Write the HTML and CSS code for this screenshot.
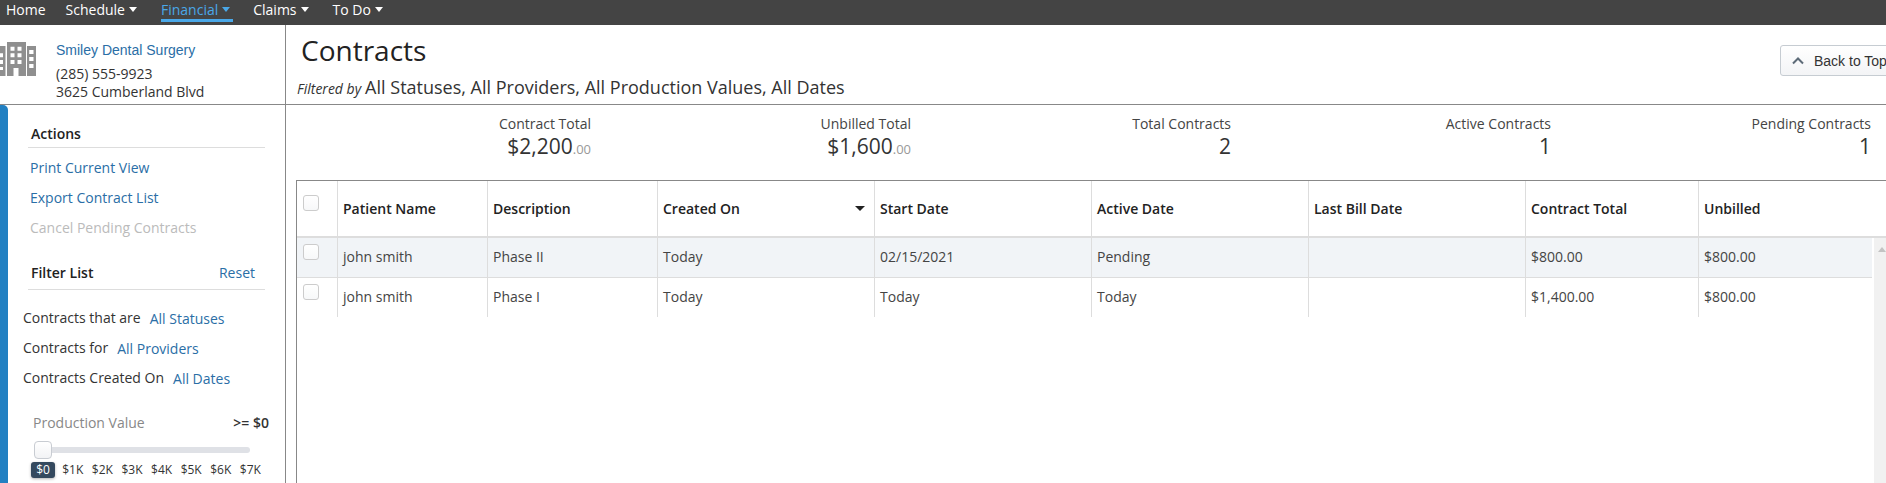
FILE: index.html
```html
<!DOCTYPE html>
<html lang="en">
<head>
<meta charset="utf-8">
<title>Contracts</title>
<link rel="stylesheet" href="styles.css">
</head>
<body>
<nav class="topnav">
  <a class="nav-item nav-home">Home</a>
  <a class="nav-item nav-schedule">Schedule<span class="caret"></span></a>
  <a class="nav-item nav-financial active">Financial<span class="caret"></span></a>
  <a class="nav-item nav-claims">Claims<span class="caret"></span></a>
  <a class="nav-item nav-todo">To Do<span class="caret"></span></a>
</nav>
<header class="head">
  <div class="office">
    <svg class="office-icon" width="37" height="34" viewBox="0 0 37 34">
      <path fill="#8f8f8f" fill-rule="evenodd" d="M7 0h19v34h-7.500v-8h-5v8H7z M10.500 4.700v4h4v-4z M17.500 4.700v4h4v-4z M10.500 11.300v4h4v-4z M17.500 11.300v4h4v-4z M10.500 18v4h4v-4z M17.500 18v4h4v-4z"/>
      <path fill="#8f8f8f" fill-rule="evenodd" d="M0 4h5.500v30H0z M0 11.300v4h3v-4z M0 18v4h3v-4z M0 25v3h3v-3z"/>
      <path fill="#8f8f8f" fill-rule="evenodd" d="M27 4h9v30h-9z M29.200 8v4h4.300V8z M29.200 15v4h4.300v-4z M29.200 22v4h4.300v-4z"/>
    </svg>
    <div class="office-text">
      <a class="office-name">Smiley Dental Surgery</a>
      <div class="office-line phone">(285) 555-9923</div>
      <div class="office-line">3625 Cumberland Blvd</div>
    </div>
  </div>
  <div class="page-head">
    <div class="title-block">
      <h1>Contracts</h1>
      <p class="filtered"><em>Filtered by</em><span>All Statuses, All Providers, All Production Values, All Dates</span></p>
    </div>
    <button class="back-top">
      <svg width="14" height="9" viewBox="0 0 14 9"><path d="M2 7.500 7 2.500l5 5" fill="none" stroke="#5d6b78" stroke-width="2"/></svg>
      <span>Back to Top</span>
    </button>
  </div>
</header>
<div class="content">
  <aside class="side">
    <div class="side-tab"></div>
    <div class="side-body">
      <div class="side-title"><span>Actions</span></div>
      <ul class="actions">
        <li><a>Print Current View</a></li>
        <li><a>Export Contract List</a></li>
        <li><a class="disabled">Cancel Pending Contracts</a></li>
      </ul>
      <div class="side-title filter-title"><span>Filter List</span><a>Reset</a></div>
      <ul class="filters">
        <li>Contracts that are<a>All Statuses</a></li>
        <li>Contracts for<a>All Providers</a></li>
        <li>Contracts Created On<a>All Dates</a></li>
      </ul>
      <div class="prod">
        <div class="prod-head"><span class="prod-label">Production Value</span><b>&gt;= $0</b></div>
        <div class="track"><span class="handle"></span></div>
        <div class="ticks">
          <span class="tick current">$0</span><span class="tick">$1K</span><span class="tick">$2K</span><span class="tick">$3K</span><span class="tick">$4K</span><span class="tick">$5K</span><span class="tick">$6K</span><span class="tick">$7K</span>
        </div>
      </div>
    </div>
  </aside>
  <main class="main">
    <section class="stats">
      <div class="stat"><div class="stat-label">Contract Total</div><div class="stat-value">$2,200<small>.00</small></div></div>
      <div class="stat"><div class="stat-label">Unbilled Total</div><div class="stat-value">$1,600<small>.00</small></div></div>
      <div class="stat"><div class="stat-label">Total Contracts</div><div class="stat-value">2</div></div>
      <div class="stat"><div class="stat-label">Active Contracts</div><div class="stat-value">1</div></div>
      <div class="stat"><div class="stat-label">Pending Contracts</div><div class="stat-value">1</div></div>
    </section>
    <section class="grid">
      <div class="row row-head">
        <div class="cell c0"><span class="check"></span></div>
        <div class="cell c1">Patient Name</div>
        <div class="cell c2">Description</div>
        <div class="cell c3 sorted">Created On<span class="sort"></span></div>
        <div class="cell c4">Start Date</div>
        <div class="cell c5">Active Date</div>
        <div class="cell c6">Last Bill Date</div>
        <div class="cell c7">Contract Total</div>
        <div class="cell c8">Unbilled</div>
      </div>
      <div class="grid-body">
        <div class="rows">
          <div class="row row-data alt">
            <div class="cell c0"><span class="check"></span></div>
            <div class="cell c1">john smith</div>
            <div class="cell c2">Phase II</div>
            <div class="cell c3">Today</div>
            <div class="cell c4">02/15/2021</div>
            <div class="cell c5">Pending</div>
            <div class="cell c6"></div>
            <div class="cell c7">$800.00</div>
            <div class="cell c8">$800.00</div>
          </div>
          <div class="row row-data">
            <div class="cell c0"><span class="check"></span></div>
            <div class="cell c1">john smith</div>
            <div class="cell c2">Phase I</div>
            <div class="cell c3">Today</div>
            <div class="cell c4">Today</div>
            <div class="cell c5">Today</div>
            <div class="cell c6"></div>
            <div class="cell c7">$1,400.00</div>
            <div class="cell c8">$800.00</div>
          </div>
        </div>
        <div class="scrollbar"><span class="scroll-up"></span></div>
      </div>
    </section>
  </main>
</div>
</body>
</html>
```
FILE: styles.css
```css
* { box-sizing: border-box; }
html, body { margin: 0; height: 483px; overflow: hidden; background: #fff; }
body { font: 14px/20px "Open Sans", "Liberation Sans", sans-serif; color: #333; display: flex; flex-direction: column; width: 1886px; }
a { color: #2a6ea6; text-decoration: none; }
ul { list-style: none; margin: 0; padding: 0; }

.topnav { height: 25px; flex: none; background: #444; display: flex; align-items: flex-start; padding-left: 6px; }
.nav-item { color: #fff; height: 22px; line-height: 20px; white-space: nowrap; }
.nav-home { margin-right: 20px; }
.nav-schedule { margin-right: 24px; }
.nav-financial { margin-right: 20px; padding: 0 3px 0 0; color: #4aa8e8; border-bottom: 3px solid #4aa8e8; }
.nav-claims { margin-right: 24px; }
.caret { display: inline-block; margin-left: 4px; vertical-align: 3px; border-left: 4.5px solid transparent; border-right: 4.5px solid transparent; border-top: 5px solid currentColor; }

.head { display: flex; height: 80px; flex: none; border-bottom: 1px solid #888; }
.office { width: 286px; flex: none; border-right: 1px solid #888; display: flex; align-items: flex-start; padding-top: 16px; }
.office-icon { margin-top: 1px; margin-right: 19px; flex: none; }
.office-name { display: block; font: 14px/18px "Liberation Sans", Arial, sans-serif; margin-bottom: 6px; }
.office-line { line-height: 18px; color: #333; }
.page-head { flex: 1; position: relative; display: flex; min-width: 0; padding-left: 11px; overflow: hidden; }
h1 { margin: 6px 0 0 4px; font-weight: 400; font-size: 28px; line-height: 38px; color: #222; }
.filtered { margin: 6px 0 0; line-height: 24px; color: #333; white-space: nowrap; display: flex; align-items: baseline; }
.filtered em { margin-right: 4px; }
.filtered span { font-size: 18px; }
.title-block { flex: 1; }
.back-top { flex: none; width: 140px; height: 31px; margin: 20px -34px 0 0; padding: 0 0 0 10px; text-align: left; display: flex; align-items: center; gap: 9px; background: linear-gradient(#fff, #f3f4f6); border: 1px solid #c6ccd2; border-radius: 3px; font: 14px/20px "Liberation Sans", Arial, sans-serif; color: #333; }

.content { flex: 1; display: flex; min-height: 0; }
.side { width: 286px; flex: none; border-right: 1px solid #888; display: flex; }
.side-tab { width: 8px; flex: none; background: #2280c2; border-top-right-radius: 5px; }
.side-body { flex: 1; min-width: 0; }
.side-title { margin: 19px 20px 0 20px; height: 24px; padding: 0 3px; border-bottom: 1px solid #ddd; font-weight: 600; line-height: 20px; color: #222; display: flex; justify-content: space-between; }
.side-title a { font-weight: 400; margin-right: 7px; }
.actions { margin-top: 5px; margin-left: 22px; }
.actions li { height: 30px; line-height: 30px; }
.actions .disabled { color: #bbb; }
.filter-title { margin-top: 20px; height: 27px; }
.filters { margin: 13px 0 0 15px; }
.filters li { height: 30px; line-height: 30px; white-space: nowrap; }
.filters a { margin-left: 9px; position: relative; top: 1px; }
.prod { margin: 20px 20px 0 25px; }
.prod-head { display: flex; justify-content: space-between; line-height: 20px; margin-right: -4px; }
.prod-label { color: #888; }
.prod-head b { font-weight: 600; color: #333; font-size: 14px; }
.track { position: relative; height: 6px; margin: 14px 15px 0 2px; background: #dfe1e6; border-radius: 3px; }
.handle { position: absolute; left: -1px; top: -6px; width: 18px; height: 18px; background: linear-gradient(#fff, #f2f3f5); border: 1px solid #c8ccd2; border-radius: 4px; }
.ticks { display: flex; margin: 9px 0 0 -2px; }
.tick { font-size: 12px; line-height: 16px; width: 29.6px; text-align: center; flex: none; color: #333; }
.current { width: 24px; margin-right: 3px; background: #34495e; color: #fff; border-radius: 3px; box-shadow: 0 1px 3px rgba(0,0,0,.3); }

.main { flex: 1; min-width: 0; display: flex; flex-direction: column; }
.stats { display: grid; grid-template-columns: repeat(5, 320px); height: 75px; flex: none; }
.stat { text-align: right; padding: 9px 15px 0 0; }
.stat-label { line-height: 20px; color: #444; }
.stat-value { font-size: 21px; line-height: 24px; color: #333; }
.stat-value small { font-size: 13px; color: #999; }

.grid { flex: 1; margin-left: 10px; border-top: 1px solid #888; border-left: 1px solid #888; min-height: 0; }
.row { display: flex; }
.cell { flex: none; padding-left: 5px; border-left: 1px solid #ddd; white-space: nowrap; position: relative; }
.c0 { width: 40px; border-left: 0; padding-left: 6px; }
.c1 { width: 150px; }
.c2 { width: 170px; }
.c3 { width: 217px; }
.c4 { width: 217px; }
.c5 { width: 217px; }
.c6 { width: 217px; }
.c7 { width: 173px; }
.c8 { flex: 1; }
.row-head { height: 57px; border-bottom: 2px solid #ddd; font-weight: 600; color: #222; }
.row-head .cell { line-height: 55px; }
.row-head .c0 { padding-top: 14px; line-height: 0; }
.sorted { padding-right: 12px; }
.sort { position: absolute; right: 9px; top: 25px; border-left: 5px solid transparent; border-right: 5px solid transparent; border-top: 5px solid #222; }
.check { display: block; width: 16px; height: 16px; background: linear-gradient(#fff, #f7f8f9); border: 1px solid #ccc; border-radius: 3px; }
.grid-body { display: flex; }
.rows { flex: 1; min-width: 0; }
.row-data { height: 39px; line-height: 38px; color: #444; }
.row-data .c0 { padding-top: 6px; line-height: 0; }
.row-data.alt { height: 40px; background: #f1f4f7; border-bottom: 1px solid #ddd; }
.scrollbar { width: 12px; margin-left: 2px; height: 246px; background: #f1f1f1; flex: none; position: relative; }
.scroll-up { position: absolute; left: 4px; top: 9px; border-left: 4px solid transparent; border-right: 4px solid transparent; border-bottom: 5px solid #c3c3c3; }
```
